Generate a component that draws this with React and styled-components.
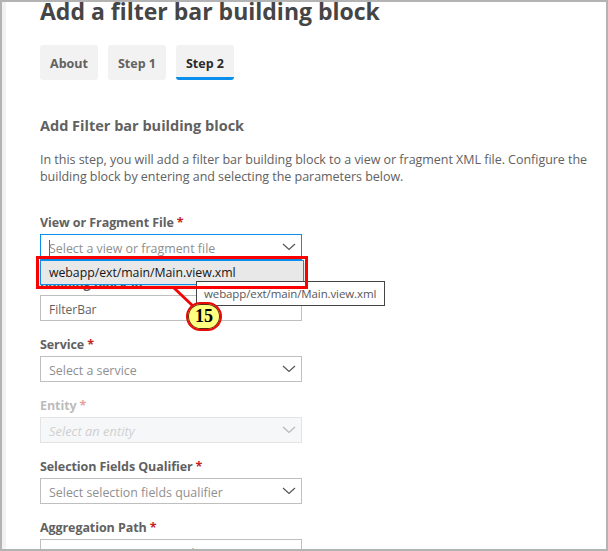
import React from "react";
import styled, { createGlobalStyle, css } from "styled-components";

const GlobalStyle = createGlobalStyle`
  * { box-sizing: border-box; }
  body { margin: 0; background: #fff; font-family: "Open Sans", "Noto Sans", sans-serif; }
`;

const Frame = styled.div`
  position: relative;
  width: 608px;
  height: 551px;
  overflow: hidden;
  display: flex;
  border: 2px solid #b3b3b3;
  background: #fff;
`;

const SideStrip = styled.div`
  flex: none;
  width: 4px;
  background: #f2f2f2;
`;

const Page = styled.main`
  flex: 1;
  min-width: 0;
  display: flex;
  flex-direction: column;
  padding-left: 34px;
  color: #616161;
  white-space: nowrap;
`;

const Title = styled.h1`
  margin: -7px 0 0;
  height: 32px;
  font-size: 23px;
  line-height: 32px;
  font-weight: 700;
  color: #454545;
`;

const Tabs = styled.nav`
  display: flex;
  gap: 10px;
  margin-top: 18px;
`;

const Tab = styled.button`
  width: 58px;
  height: 35px;
  padding: 5px 0 0;
  border: 0;
  border-bottom: 3px solid ${(p) => (p.$active ? "#0a8fec" : "#f2f2f2")};
  border-radius: 3px;
  background: #f2f2f2;
  color: ${(p) => (p.$active ? "#2b2b2b" : "#616161")};
  font: 700 12.5px/18px "Open Sans", sans-serif;
`;

const Heading = styled.h2`
  margin: 36px 0 0;
  font-size: 14.5px;
  line-height: 20px;
  font-weight: 700;
`;

const Intro = styled.p`
  margin: 15px 0 0;
  font-size: 12.5px;
  line-height: 17px;
  letter-spacing: -0.03px;
`;

const Line = styled.span`
  display: block;
`;

const Form = styled.form`
  display: flex;
  flex-direction: column;
  gap: 15px;
  margin-top: 29px;
`;

const Field = styled.div`
  flex: none;
  width: 262px;
  opacity: ${(p) => (p.$disabled ? 0.42 : 1)};
`;

const Label = styled.label`
  display: block;
  height: 20px;
  padding-top: 1px;
  font-size: 12.5px;
  line-height: 16px;
  font-weight: 700;
  letter-spacing: -0.08px;
`;

const Required = styled.span`
  margin-left: 3px;
  color: #c4231b;
`;

const Box = styled.div`
  display: flex;
  align-items: center;
  justify-content: space-between;
  height: 26px;
  padding: 3px 5px 0 8px;
  border: 1px solid ${(p) => (p.$focus ? "#0a8fec" : "#bfbfbf")};
  background: ${(p) => (p.$disabled ? "#e8edf1" : "#fff")};
`;

const Value = styled.span`
  font-size: 12.4px;
  line-height: 18px;
  color: ${(p) => (p.$filled ? "#616161" : "#8f8f8f")};
  ${(p) => p.$filled && css`font-size: 12px;`}
  ${(p) => p.$italic && css`margin-top: -2px; font-size: 12.9px; font-style: italic;`}
  ${(p) => p.$caret && css`box-shadow: inset 1px 0 0 #666;`}
`;

const Arrow = styled.svg`
  flex: none;
  width: 14px;
  height: 8px;
  margin-bottom: 3px;
  fill: none;
  stroke: #555;
  stroke-width: 1.2;
`;

const Menu = styled.div`
  position: absolute;
  left: 38px;
  top: 258px;
  width: 264px;
  height: 25px;
  padding: 1px 8px 0;
  border: 1px solid #0a8fec;
  background: #e8e8e8;
  box-shadow: 0 2px 5px rgba(0, 0, 0, 0.22);
  color: #161616;
  font-size: 12.3px;
  line-height: 22px;
  letter-spacing: -0.03px;
  white-space: nowrap;
`;

const Tooltip = styled.div`
  position: absolute;
  left: 194px;
  top: 279px;
  width: 189px;
  height: 25px;
  padding: 1px 7px 0;
  border: 1px solid #454545;
  background: #fff;
  color: #575757;
  font-size: 11.5px;
  line-height: 22px;
  letter-spacing: -0.11px;
  white-space: nowrap;
`;

const Highlight = styled.div`
  position: absolute;
  left: 34px;
  top: 254px;
  width: 272px;
  height: 33px;
  border: 3px solid #fa0000;
`;

const Pointer = styled.svg`
  position: absolute;
  left: 166px;
  top: 284px;
  width: 30px;
  height: 24px;
  stroke: #f00404;
  stroke-width: 2.8;
`;

const Badge = styled.div`
  position: absolute;
  left: 184px;
  top: 300px;
  width: 36px;
  height: 29px;
  border: 2px solid #e80808;
  border-radius: 15px;
  background: #ffff80;
  box-shadow: inset 0 0 0 1px #5a2a10;
  color: #000;
  font: 700 18px/25px "Liberation Serif", serif;
  text-align: center;
`;

const fields = [
  { label: "View or Fragment File", value: "Select a view or fragment file", focus: true, caret: true },
  { label: "Building Block Id", value: "FilterBar", filled: true, input: true },
  { label: "Service", value: "Select a service" },
  { label: "Entity", value: "Select an entity", disabled: true },
  { label: "Selection Fields Qualifier", value: "Select selection fields qualifier" },
  { label: "Aggregation Path", value: "Enter an aggregation path", input: true },
];

function FormField({ f }) {
  return (
    <Field $disabled={f.disabled}>
      <Label>
        {f.label}
        <Required>*</Required>
      </Label>
      <Box $focus={f.focus} $disabled={f.disabled}>
        <Value $filled={f.filled} $italic={f.disabled} $caret={f.caret}>
          {f.value}
        </Value>
        {!f.input && (
          <Arrow viewBox="0 0 14 8">
            <path d="M1 1l6 5.5L13 1" />
          </Arrow>
        )}
      </Box>
    </Field>
  );
}

export default function App() {
  return (
    <Frame>
      <GlobalStyle />
      <SideStrip />
      <Page>
        <Title>Add a filter bar building block</Title>
        <Tabs>
          <Tab>About</Tab>
          <Tab>Step 1</Tab>
          <Tab $active>Step 2</Tab>
        </Tabs>
        <Heading>Add Filter bar building block</Heading>
        <Intro>
          <Line>In this step, you will add a filter bar building block to a view or fragment XML file. Configure the</Line>
          <Line>building block by entering and selecting the parameters below.</Line>
        </Intro>
        <Form>
          {fields.map((f) => (
            <FormField key={f.label} f={f} />
          ))}
        </Form>
      </Page>
      <Menu>webapp/ext/main/Main.view.xml</Menu>
      <Tooltip>webapp/ext/main/Main.view.xml</Tooltip>
      <Highlight />
      <Pointer viewBox="0 0 30 24">
        <path d="M5 1L26 21" />
      </Pointer>
      <Badge>15</Badge>
    </Frame>
  );
}
